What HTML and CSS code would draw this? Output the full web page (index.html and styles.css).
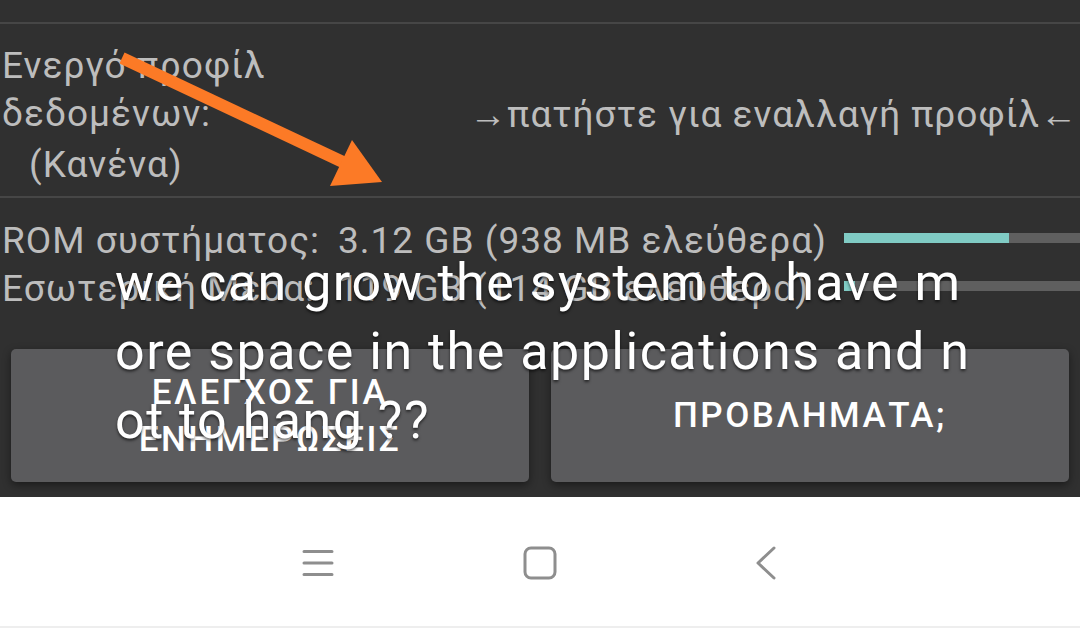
FILE: index.html
```html
<!DOCTYPE html>
<html lang="el">
  <head>
    <meta charset="UTF-8" />
    <meta name="viewport" content="width=device-width, initial-scale=1.0" />
    <title>Πληροφορίες συσκευής</title>
    <link rel="stylesheet" href="styles.css">
  </head>
  <body>
    <div class="screen">
      <div class="top-bar"></div>

      <div class="profile-row">
        <div class="profile-label">
          <p class="label-line">Ενεργό προφίλ</p>
          <p class="label-line">δεδομένων:</p>
          <p class="label-line profile-none">(Κανένα)</p>
        </div>
        <p class="profile-switch">→πατήστε για εναλλαγή προφίλ←</p>
      </div>

      <div class="storage">
        <div class="storage-row">
          <span class="storage-name">ROM συστήματος:</span>
          <span class="storage-value">3.12 GB (938 MB ελεύθερα)</span>
          <div class="storage-bar"><div class="storage-fill" style="width: 70%;"></div></div>
        </div>
        <div class="storage-row">
          <span class="storage-name">Εσωτερική Μέσα:</span>
          <span class="storage-value">119 GB (114 GB ελεύθερα)</span>
          <div class="storage-bar"><div class="storage-fill" style="width: 4.5%;"></div></div>
        </div>
      </div>

      <div class="actions">
        <button class="action-button">ΕΛΕΓΧΟΣ ΓΙΑ<br>ΕΝΗΜΕΡΩΣΕΙΣ</button>
        <button class="action-button">ΠΡΟΒΛΗΜΑΤΑ;</button>
      </div>

      <svg class="arrow" viewBox="0 0 1080 497" width="1080" height="497">
        <line x1="122" y1="58" x2="345" y2="163" stroke="#fc7a26" stroke-width="12" />
        <polygon points="352,140 330,186 382,182" fill="#fc7a26" />
      </svg>

      <p class="caption">we can grow the system to have m<br>ore space in the applications and n<br>ot to hang ??</p>
    </div>

    <nav class="nav-bar">
      <div class="nav-cell">
        <svg class="menu-icon" width="32" height="28" viewBox="0 0 32 28">
          <path d="M2 2.5h28M2 14h28M2 25.5h28" stroke="#8e8e8e" stroke-width="3" stroke-linecap="round" fill="none" />
        </svg>
      </div>
      <div class="nav-cell">
        <svg width="34" height="34" viewBox="0 0 34 34">
          <rect x="2" y="2" width="30" height="30" rx="6" stroke="#8e8e8e" stroke-width="3" fill="none" />
        </svg>
      </div>
      <div class="nav-cell">
        <svg width="22" height="34" viewBox="0 0 22 34">
          <path d="M19 2L3 17l16 15" stroke="#8e8e8e" stroke-width="3" stroke-linecap="round" stroke-linejoin="round" fill="none" />
        </svg>
      </div>
    </nav>
  </body>
</html>
```

FILE: styles.css
```css
body{
  margin: 0;
  background-color: white;
  font-family: Roboto, "Noto Sans", sans-serif;
}
p{
  margin: 0;
}
.screen{
  position: relative;
  height: 497px;
  background-color: rgb(48, 48, 48);
  color: rgb(189, 189, 189);
  font-size: 37px;
  letter-spacing: 1px;
  overflow: hidden;
}
.top-bar{
  height: 22px;
  border-bottom: 2px solid rgb(70, 70, 70);
}
.profile-row{
  display: flex;
  justify-content: space-between;
  height: 174px;
  box-sizing: border-box;
  padding-top: 18px;
  border-bottom: 2px solid rgb(70, 70, 70);
}
.label-line{
  line-height: 48px;
  padding-left: 2px;
}
.profile-none{
  padding-left: 29px;
  margin-top: 3px;
}
.profile-switch{
  line-height: 48px;
  margin-top: 49px;
  padding-right: 2px;
}
.storage{
  padding-top: 19px;
}
.storage-row{
  display: grid;
  grid-template-columns: 338px 506px 1fr;
  align-items: center;
  line-height: 48px;
}
.storage-name{
  padding-left: 2px;
}
.storage-bar{
  height: 10px;
  margin-top: -6px;
  background-color: rgb(95, 95, 95);
}
.storage-fill{
  height: 100%;
  background-color: rgb(128, 203, 196);
}
.actions{
  display: flex;
  gap: 22px;
  padding: 0 11px;
  margin-top: 36px;
}
.action-button{
  flex: 1;
  height: 133px;
  background-color: rgb(91, 91, 93);
  color: white;
  border: none;
  border-radius: 5px;
  box-shadow: 0 3px 8px rgba(0, 0, 0, 0.45);
  font-family: Roboto, "Noto Sans", sans-serif;
  font-size: 35px;
  font-weight: 500;
  letter-spacing: 2.5px;
  line-height: 47px;
}
.arrow{
  position: absolute;
  top: 0;
  left: 0;
}
.caption{
  position: absolute;
  top: 248px;
  left: 115px;
  color: white;
  font-size: 52px;
  letter-spacing: 1.5px;
  line-height: 69px;
  text-shadow: 0 2px 3px rgba(0, 0, 0, 0.6);
}
.nav-bar{
  display: flex;
  justify-content: center;
  align-items: center;
  height: 129px;
  border-bottom: 2px solid rgb(238, 238, 238);
}
.nav-cell{
  width: 226px;
  display: flex;
  justify-content: center;
  margin-top: 2px;
}
.menu-icon{
  margin-left: 8px;
}
```
